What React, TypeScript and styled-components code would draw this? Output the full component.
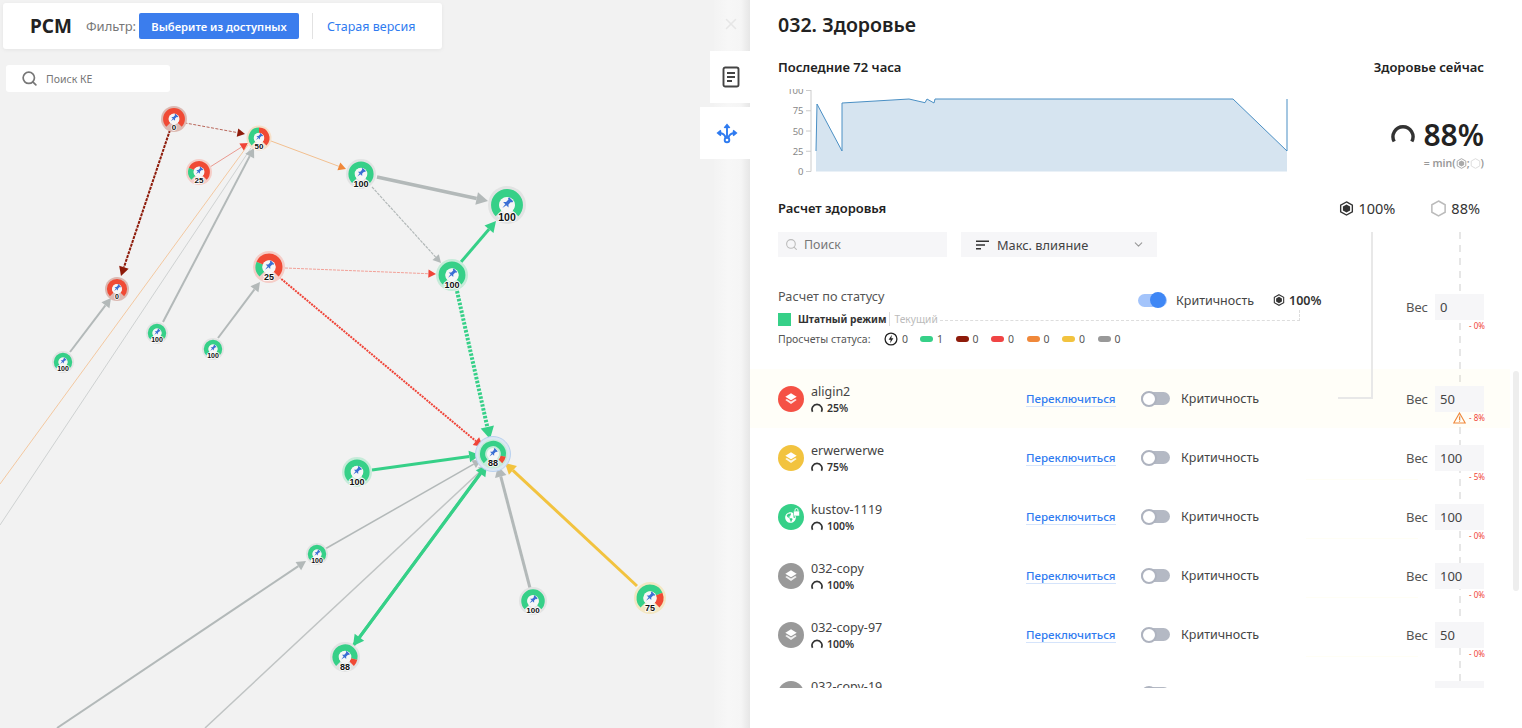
import React from "react";
import styled, { createGlobalStyle } from "styled-components";
import { ChevronDown, Search, X } from "lucide-react";
import { FaGlobeAmericas } from "react-icons/fa";

const GlobalStyle = createGlobalStyle`
  html, body {
    margin: 0;
    padding: 0;
    height: 100%;
    overflow: hidden;
    background: #fff;
    font-family: "Noto Sans", "Open Sans", sans-serif;
    color: #333;
  }
  * { box-sizing: border-box; }
`;

/* ---------- graph data ---------- */

type NodeItem = {
  x: number;
  y: number;
  r: number;
  score: number;
  halo: string;
  selected?: boolean;
};

const HALO_GRAY = "#e2e3e3";
const HALO_GREEN = "#c6ebd9";

const nodes: NodeItem[] = [
  { x: 174, y: 119, r: 13, score: 0, halo: "#dcb9b2" },
  { x: 259, y: 138, r: 12.5, score: 50, halo: "#f6dfc8" },
  { x: 199, y: 172, r: 13, score: 25, halo: "#f5cdc7" },
  { x: 361, y: 174, r: 15, score: 100, halo: HALO_GRAY },
  { x: 507, y: 205, r: 19, score: 100, halo: HALO_GRAY },
  { x: 269, y: 267, r: 16, score: 25, halo: "#f5cdc7" },
  { x: 452, y: 275, r: 16, score: 100, halo: HALO_GREEN },
  { x: 117, y: 289, r: 12, score: 0, halo: "#dcb9b2" },
  { x: 157, y: 333, r: 11, score: 100, halo: HALO_GRAY },
  { x: 213, y: 349, r: 11, score: 100, halo: HALO_GRAY },
  { x: 63, y: 362, r: 11, score: 100, halo: HALO_GRAY },
  { x: 493, y: 454, r: 14.5, score: 88, halo: HALO_GREEN, selected: true },
  { x: 357, y: 472, r: 15, score: 100, halo: HALO_GREEN },
  { x: 317, y: 554, r: 11, score: 100, halo: HALO_GRAY },
  { x: 533, y: 601, r: 14, score: 100, halo: HALO_GRAY },
  { x: 650, y: 598, r: 16, score: 75, halo: "#f3e7c3" },
  { x: 345, y: 657, r: 15, score: 88, halo: HALO_GRAY },
];

type EdgeItem = {
  from: [number, number];
  to: [number, number];
  color: string;
  head?: string;
  width: number;
  dash?: string;
  noHead?: boolean;
};

const edges: EdgeItem[] = [
  { from: [0, 484], to: [248, 145], color: "#f3c8a0", width: 1, noHead: true },
  { from: [0, 525], to: [251, 148], color: "#cfd2d2", width: 1, noHead: true },
  { from: [180, 122], to: [245, 134], color: "#b9675b", head: "#8e1b0a", width: 1, dash: "3 1.5" },
  { from: [170, 130], to: [121, 276], color: "#8e1b0a", width: 2, dash: "3 1" },
  { from: [210, 167], to: [248, 143], color: "#ea9a90", head: "#f04438", width: 1 },
  { from: [271, 141], to: [346, 169], color: "#f3c090", head: "#f0883a", width: 1 },
  { from: [377, 177], to: [488, 201], color: "#b3b9b9", width: 3.5 },
  { from: [372, 187], to: [441, 263], color: "#b3b9b9", width: 1.2, dash: "3 1" },
  { from: [461, 262], to: [496, 221], color: "#36d088", width: 3 },
  { from: [285, 268], to: [436, 274], color: "#f2a198", head: "#f04438", width: 1, dash: "3 1" },
  { from: [279, 277], to: [483, 447], color: "#f04438", width: 2, dash: "2 1" },
  { from: [457, 291], to: [490, 439], color: "#36d088", width: 4, dash: "2.5 1.5" },
  { from: [372, 470], to: [480, 455], color: "#36d088", width: 3 },
  { from: [218, 338], to: [260, 282], color: "#b3b9b9", width: 2 },
  { from: [163, 322], to: [254, 148], color: "#b3b9b9", width: 2 },
  { from: [70, 352], to: [111, 298], color: "#b3b9b9", width: 2 },
  { from: [325, 549], to: [481, 460], color: "#b3b9b9", width: 1.5 },
  { from: [57, 728], to: [306, 561], color: "#b3b9b9", width: 2 },
  { from: [205, 728], to: [487, 465], color: "#c0c4c4", width: 1.5 },
  { from: [485, 467], to: [353, 646], color: "#36d088", width: 3 },
  { from: [353, 646], to: [487, 465], color: "#36d088", width: 3 },
  { from: [530, 588], to: [498, 466], color: "#b3b9b9", width: 3 },
  { from: [637, 586], to: [505, 463], color: "#f2c33f", width: 3 },
];

/* ---------- graph drawing ---------- */

const polar = (x: number, y: number, r: number, deg: number) => {
  const a = ((deg - 90) * Math.PI) / 180;
  return `${(x + r * Math.cos(a)).toFixed(2)} ${(y + r * Math.sin(a)).toFixed(2)}`;
};

const arc = (x: number, y: number, r: number, a: number, b: number) =>
  `M${polar(x, y, r, a)} A${r} ${r} 0 ${b - a > 180 ? 1 : 0} 1 ${polar(x, y, r, b)}`;

const NodeLabel = styled.text<{ $size: number }>`
  font-family: "Liberation Sans", sans-serif;
  font-weight: 700;
  font-size: ${(p) => p.$size}px;
  fill: #111;
  text-anchor: middle;
  paint-order: stroke;
  stroke: #fff;
  stroke-width: 1.6px;
`;

const Edge = ({ item }: { item: EdgeItem }) => {
  const [x1, y1] = item.from;
  const [x2, y2] = item.to;
  const angle = Math.atan2(y2 - y1, x2 - x1);
  const len = 6 + item.width * 1.6;
  const half = 3.2 + item.width * 0.9;
  const bx = x2 - Math.cos(angle) * len;
  const by = y2 - Math.sin(angle) * len;
  const nx = -Math.sin(angle) * half;
  const ny = Math.cos(angle) * half;
  return (
    <g>
      <line
        x1={x1}
        y1={y1}
        x2={item.noHead ? x2 : bx}
        y2={item.noHead ? y2 : by}
        stroke={item.color}
        strokeWidth={item.width}
        strokeDasharray={item.dash}
      />
      {!item.noHead && (
        <polygon
          points={`${x2},${y2} ${bx + nx},${by + ny} ${bx - nx},${by - ny}`}
          fill={item.head || item.color}
        />
      )}
    </g>
  );
};

const GraphNode = ({ item }: { item: NodeItem }) => {
  const { x, y, r, score } = item;
  const mid = item.selected ? r * 0.72 : r * 0.62;
  const stroke = item.selected ? r * 0.36 : r * 0.44;
  const split = -135 + (270 * score) / 100;
  const font = r > 17 ? 10.5 : r > 14 ? 9 : r > 12 ? 8 : 7;
  const scale = r / 11;
  return (
    <g>
      {item.selected && (
        <circle cx={x} cy={y} r={17.5} fill="#dbe7f3" stroke="#b9d1ef" strokeWidth={1} />
      )}
      <circle cx={x} cy={y} r={r} fill={item.halo} />
      {score > 0 && (
        <path d={arc(x, y, mid, -135, split)} fill="none" stroke="#36d088" strokeWidth={stroke} />
      )}
      {score < 100 && (
        <path d={arc(x, y, mid, split, 135)} fill="none" stroke="#f04a35" strokeWidth={stroke} />
      )}
      <circle cx={x} cy={y} r={r * 0.42} fill="#f6f6f6" />
      <path
        transform={`translate(${x} ${y - r * 0.08}) rotate(45) scale(${scale * 0.76})`}
        fill="#3b6fd4"
        d="M-2.2-4.5h4.4v1.2l-.9.4v2.6l1.6 1.6h-5.8l1.6-1.6v-2.6l-.9-.4z M-.6 1.3h1.2l-.6 3.7z"
      />
      <NodeLabel $size={font} x={x} y={y + r * 0.62 + font * 0.36}>
        {score}
      </NodeLabel>
    </g>
  );
};

/* ---------- icons ---------- */

const ArcIcon = ({ size }: { size: number }) => (
  <svg width={size} height={size} viewBox="0 0 24 24" fill="none">
    <path d="M3.2 19.5 A10 10 0 1 1 20.8 19.5" stroke="#333" strokeWidth={3.4} />
  </svg>
);

const HexIcon = ({ size, filled, color }: { size: number; filled?: boolean; color?: string }) => (
  <svg width={size} height={size} viewBox="0 0 20 20">
    <polygon
      points="10,1.2 17.8,5.6 17.8,14.4 10,18.8 2.2,14.4 2.2,5.6"
      fill="none"
      stroke={color || "#bbb"}
      strokeWidth={1.8}
    />
    {filled && (
      <polygon points="10,4.6 14.8,7.3 14.8,12.7 10,15.4 5.2,12.7 5.2,7.3" fill={color || "#222"} />
    )}
  </svg>
);

const LayersIcon = () => (
  <svg width={14} height={14} viewBox="0 0 16 16" fill="#fff">
    <path d="M8 1.5 14.5 5.4 8 9.3 1.5 5.4z" />
    <path d="M3.2 8 8 10.9 12.8 8l1.7 1.1L8 13.6 1.5 9.1z" opacity={0.85} />
  </svg>
);

const GlobeGlyph = styled.span`
  position: relative;
  display: flex;
  color: #fff;
  margin: 2px 2px 0 0;
`;

const LockMark = styled.svg`
  position: absolute;
  right: -4px;
  top: -4px;
`;

const GlobeIcon = () => (
  <GlobeGlyph>
    <FaGlobeAmericas size={11} />
    <LockMark width={7} height={8} viewBox="0 0 7 8">
      <rect x={0.5} y={3} width={6} height={5} rx={0.8} fill="#fff" stroke="#36d088" strokeWidth={0.6} />
      <path d="M2 3V2a1.5 1.5 0 0 1 3 0v1" fill="none" stroke="#fff" strokeWidth={0.9} />
    </LockMark>
  </GlobeGlyph>
);

const DocIcon = () => (
  <svg width={18} height={22} viewBox="0 0 18 22" fill="none" stroke="#444" strokeWidth={1.9}>
    <rect x={1.5} y={1.5} width={15} height={19} rx={1.8} />
    <path d="M5 7h8M5 11h8M5 15h5" />
  </svg>
);

const RouteIcon = () => (
  <svg width={22} height={22} viewBox="0 0 22 22" fill="none" stroke="#2f7bf0" strokeWidth={1.9}>
    <circle cx={11} cy={18} r={2.3} />
    <path d="M11 15.5V3.5" />
    <path d="M8.4 6 11 3l2.6 3" fill="#2f7bf0" />
    <path d="M9.6 16C9 12.5 6 11 2.5 11" />
    <path d="M12.4 16C13 12.5 16 11 19.5 11" />
    <path d="M5 8.6 2 11l3 2.4" fill="#2f7bf0" />
    <path d="M17 8.6l3 2.4-3 2.4" fill="#2f7bf0" />
  </svg>
);

const SortIcon = () => (
  <svg width={13} height={10} viewBox="0 0 13 10" stroke="#333" strokeWidth={1.5}>
    <path d="M0 1.2h13M0 5h9M0 8.8h5" />
  </svg>
);

const BoltIcon = () => (
  <svg width={14} height={14} viewBox="0 0 14 14">
    <circle cx={7} cy={7} r={5.9} fill="none" stroke="#222" strokeWidth={1.3} />
    <path d="M7.9 2.8 4.6 7.7h2.1L6.1 11.2 9.4 6.3H7.3z" fill="#222" />
  </svg>
);

const WarnIcon = () => (
  <svg width={13} height={12} viewBox="0 0 13 12" fill="none" stroke="#f0883a" strokeWidth={1.1}>
    <path d="M6.5 1 12.2 11H.8z" />
    <path d="M6.5 4.5v3.4M6.5 8.8v1" />
  </svg>
);

/* ---------- canvas ---------- */

const Page = styled.div`
  display: flex;
  width: 1522px;
  height: 728px;
  overflow: hidden;
`;

const Canvas = styled.div`
  position: relative;
  flex: 0 0 750px;
  height: 728px;
  background: #f2f2f2;
  overflow: hidden;
`;

const GraphSvg = styled.svg`
  position: absolute;
  left: 0;
  top: 0;
`;

const TopBar = styled.div`
  position: absolute;
  left: 3px;
  top: 3px;
  width: 439px;
  height: 46px;
  display: flex;
  align-items: center;
  padding-left: 27px;
  background: #fff;
  border-radius: 3px;
  box-shadow: 0 1px 4px rgba(0, 0, 0, 0.06);
`;

const Logo = styled.span`
  font-size: 19px;
  font-weight: 700;
  color: #222;
  width: 56px;
`;

const FilterLabel = styled.span`
  font-size: 13px;
  color: #777;
  width: 53px;
`;

const PrimaryButton = styled.button`
  width: 160px;
  height: 26px;
  border: none;
  border-radius: 2px;
  background: #3b7ded;
  color: #fff;
  font: 600 11.2px "Noto Sans", sans-serif;
  padding: 0;
`;

const BarDivider = styled.span`
  width: 1px;
  height: 26px;
  margin: 0 14px 0 13px;
  background: #e2e2e2;
`;

const OldVersion = styled.a`
  font-size: 12.5px;
  color: #2f7bf0;
`;

const SearchKe = styled.div`
  position: absolute;
  left: 6px;
  top: 65px;
  width: 164px;
  height: 27px;
  display: flex;
  align-items: center;
  gap: 8px;
  padding-left: 15px;
  background: #fff;
  border-radius: 3px;
  font-size: 10.5px;
  color: #777;
`;

const SideStrip = styled.div`
  position: absolute;
  right: 0;
  top: 0;
  width: 36px;
  height: 728px;
  background: linear-gradient(90deg, #f3f3f3 0%, #f7f7f7 40%, #f5f5f5 75%, #e6e6e6 100%);
`;

const CloseMark = styled.div`
  position: absolute;
  left: 722px;
  top: 15px;
  color: #e6e6e6;
  display: flex;
`;

const SideTab = styled.div<{ $wide?: boolean; $top: number }>`
  position: absolute;
  right: 0;
  top: ${(p) => p.$top}px;
  width: ${(p) => (p.$wide ? 50 : 40)}px;
  height: 52px;
  background: #fff;
  display: flex;
  align-items: center;
  justify-content: center;
  padding-left: ${(p) => (p.$wide ? 4 : 2)}px;
`;

/* ---------- panel ---------- */

const Panel = styled.div`
  position: relative;
  flex: 1;
  height: 728px;
  background: #fff;
  overflow: hidden;
`;

const PanelHead = styled.div`
  padding: 0 38px 0 28px;
`;

const Title = styled.h1`
  margin: 0;
  height: 50px;
  line-height: 50px;
  font-size: 19.6px;
  font-weight: 600;
  color: #222;
`;

const HistoryRow = styled.div`
  display: flex;
  justify-content: space-between;
  height: 141px;
  margin-top: 8px;
`;

const SectionTitle = styled.div`
  height: 18px;
  line-height: 18px;
  font-size: 13px;
  font-weight: 600;
  color: #222;
`;

const ChartBox = styled.div`
  width: 512px;
  height: 90px;
  margin-top: 13px;
  overflow: hidden;
`;

const AxisText = styled.text`
  font-size: 9.5px;
  fill: #888;
  text-anchor: end;
`;

const NowColumn = styled.div`
  display: flex;
  flex-direction: column;
  align-items: flex-end;
`;

const NowValue = styled.div`
  display: flex;
  align-items: center;
  gap: 8px;
  margin-top: 38px;
  height: 40px;
  font-size: 30px;
  font-weight: 600;
  color: #222;
`;

const NowFormula = styled.div`
  display: flex;
  align-items: center;
  height: 18px;
  font-size: 10.5px;
  font-weight: 600;
  color: #999;
`;

const CalcRow = styled.div`
  display: flex;
  align-items: center;
  justify-content: space-between;
  height: 18px;
`;

const CalcValues = styled.div`
  display: flex;
  align-items: center;
  gap: 35px;
  padding-right: 4px;
`;

const HexValue = styled.span<{ $bold?: boolean; $size?: number }>`
  display: flex;
  align-items: center;
  gap: 4px;
  font-size: ${(p) => p.$size || 14.5}px;
  font-weight: ${(p) => (p.$bold ? 600 : 400)};
  color: #333;
`;

const ToolRow = styled.div`
  display: flex;
  gap: 14px;
  margin-top: 15px;
`;

const SearchField = styled.label`
  display: flex;
  align-items: center;
  gap: 6px;
  width: 169px;
  height: 25px;
  padding-left: 7px;
  background: #f6f6f8;
  color: #bbb;
`;

const SearchInput = styled.input`
  border: none;
  outline: none;
  background: none;
  width: 120px;
  padding: 0;
  font: 12.4px "Noto Sans", sans-serif;
  &::placeholder {
    color: #777;
  }
`;

const SortSelect = styled.div`
  display: flex;
  align-items: center;
  width: 196px;
  height: 25px;
  padding: 0 12px 0 15px;
  background: #f6f6f8;
  font-size: 12.8px;
  color: #444;
`;

const SortText = styled.span`
  flex: 1;
  margin-left: 8px;
`;

const StatusBlock = styled.div`
  position: relative;
  display: flex;
  height: 82px;
  margin-top: 30px;
  padding-right: 38px;
  padding-left: 28px;
`;

const StatusLeft = styled.div`
  width: 360px;
`;

const StatusTitle = styled.div`
  height: 18px;
  line-height: 18px;
  font-size: 12.7px;
  color: #555;
`;

const LegendRow = styled.div`
  display: flex;
  align-items: center;
  height: 14px;
  margin-top: 7px;
  font-size: 10.2px;
`;

const LegendSquare = styled.span`
  width: 13px;
  height: 13px;
  margin-right: 7px;
  background: #36d088;
`;

const LegendName = styled.span`
  font-weight: 700;
  color: #333;
  padding-right: 3px;
  border-right: 1px solid #ddd;
`;

const LegendCurrent = styled.span`
  color: #bbb;
  margin-left: 4px;
`;

const CountRow = styled.div`
  display: flex;
  align-items: center;
  height: 14px;
  margin-top: 6px;
  font-size: 10.5px;
  color: #555;
`;

const CountLabel = styled.span`
  width: 106px;
`;

const CountItem = styled.span<{ $width: number }>`
  display: flex;
  align-items: center;
  gap: 4px;
  width: ${(p) => p.$width}px;
`;

const Pill = styled.span<{ $color: string }>`
  width: 13px;
  height: 6px;
  border-radius: 3px;
  background: ${(p) => p.$color};
`;

const StatusCritical = styled.div`
  display: flex;
  align-items: center;
  height: 26px;
`;

const Track = styled.span<{ $on?: boolean }>`
  position: relative;
  display: block;
  width: 29px;
  height: 13px;
  border-radius: 7px;
  background: ${(p) => (p.$on ? "#a3c4fb" : "#b4b9c4")};
`;

const Knob = styled.span<{ $on?: boolean }>`
  position: absolute;
  top: -1.5px;
  left: ${(p) => (p.$on ? 12 : 0)}px;
  width: 16px;
  height: 16px;
  border-radius: 50%;
  background: ${(p) => (p.$on ? "#3f87f5" : "#fff")};
  border: ${(p) => (p.$on ? "none" : "2px solid #aeb3bf")};
`;

const CriticalLabel = styled.span<{ $gap: number; $width?: number }>`
  margin-left: ${(p) => p.$gap}px;
  width: ${(p) => (p.$width ? `${p.$width}px` : "auto")};
  font-size: 12.5px;
  color: #444;
`;

const WeightCell = styled.div`
  position: relative;
  display: flex;
  align-items: center;
  margin-left: auto;
  height: 26px;
  font-size: 13px;
  color: #555;
`;

const WeightStatus = styled(WeightCell)`
  margin-top: 7px;
`;

const WeightInput = styled.div`
  width: 49px;
  height: 26px;
  line-height: 26px;
  margin-left: 7px;
  padding-left: 5px;
  background: #f6f6f8;
  font-size: 13px;
  color: #444;
`;

const Delta = styled.span`
  position: absolute;
  right: -1px;
  top: 26px;
  display: flex;
  align-items: center;
  gap: 3px;
  font-size: 8px;
  line-height: 12px;
  color: #f04438;
`;

const RowList = styled.div`
  position: relative;
  width: 760px;
  height: 319px;
  overflow: hidden;
`;

const Row = styled.div<{ $active?: boolean }>`
  display: flex;
  align-items: center;
  height: 59px;
  padding: 0 26px 0 28px;
  background: ${(p) =>
    p.$active
      ? "rgba(255, 245, 150, 0.07)"
      : "linear-gradient(#fffef5, #fffef5) no-repeat 556px 51px / 112px 1px"};
`;

const RowInfo = styled.div`
  display: flex;
  align-items: center;
  gap: 7px;
  width: 248px;
`;

const RowBadge = styled.span<{ $color: string }>`
  display: flex;
  align-items: center;
  justify-content: center;
  width: 26px;
  height: 26px;
  border-radius: 50%;
  background: ${(p) => p.$color};
`;

const RowText = styled.div`
  padding-top: 3px;
`;

const RowName = styled.div`
  font-size: 12.5px;
  line-height: 16px;
  color: #444;
`;

const RowScore = styled.div`
  display: flex;
  align-items: center;
  gap: 4px;
  height: 16px;
  font-size: 10.5px;
  font-weight: 600;
  color: #333;
`;

const SwitchLink = styled.a`
  width: 115px;
  font-size: 11.5px;
  font-weight: 500;
  color: #2f7bf0;
`;

const SwitchText = styled.span`
  border-bottom: 1px solid #d5e4fb;
`;

/* connector lines that run behind and over the rows */

const WeightAxis = styled.div`
  position: absolute;
  left: 709px;
  top: 232px;
  width: 2px;
  height: 456px;
  background: repeating-linear-gradient(#e6e6e6 0 7px, transparent 7px 13px);
`;

const CalcBracket = styled.div`
  position: absolute;
  left: 588px;
  top: 232px;
  width: 35px;
  height: 167px;
  border-right: 2px solid #e8e8e8;
  border-bottom: 2px solid #e8e8e8;
  z-index: 2;
`;

const StatusBracket = styled.div`
  position: absolute;
  left: 190px;
  top: 310px;
  width: 360px;
  height: 11px;
  border-right: 1px dashed #ddd;
  border-bottom: 1px dashed #ddd;
`;

const ScrollThumb = styled.div`
  position: absolute;
  left: 763px;
  top: 371px;
  width: 6px;
  height: 220px;
  border-radius: 3px;
  background: #eee;
`;

/* ---------- content ---------- */

type RowItem = {
  name: string;
  score: number;
  color: string;
  weight: number;
  delta: string;
  warn?: boolean;
  globe?: boolean;
};

const rows: RowItem[] = [
  { name: "aligin2", score: 25, color: "#f55145", weight: 50, delta: "- 8%", warn: true },
  { name: "erwerwerwe", score: 75, color: "#f2c33f", weight: 100, delta: "- 5%" },
  { name: "kustov-1119", score: 100, color: "#36d088", weight: 100, delta: "- 0%", globe: true },
  { name: "032-copy", score: 100, color: "#999", weight: 100, delta: "- 0%" },
  { name: "032-copy-97", score: 100, color: "#999", weight: 50, delta: "- 0%" },
  { name: "032-copy-19", score: 100, color: "#999", weight: 100, delta: "- 0%" },
];

const counts = [
  { color: "#36d088", value: 1 },
  { color: "#8e1b0a", value: 0 },
  { color: "#f04444", value: 0 },
  { color: "#f0883a", value: 0 },
  { color: "#f2c33f", value: 0 },
  { color: "#999", value: 0 },
];

const CHART_LINE =
  "M38 64 L39 17 L64 64 L64 16 L131 12 L147 15.7 L149 12 L156 16 L157 12 L455 12 L509 64 L509 12";

const HistoryChart = () => (
  <svg width={512} height={90} viewBox="0 2 512 90">
    <path d={`${CHART_LINE} L509 84.5 L38 84.5Z`} fill="#d6e4f0" />
    <path d={CHART_LINE} fill="none" stroke="#4a8fc4" strokeWidth={1} />
    <path d="M33 3V84.5" stroke="#ccc" />
    {[100, 75, 50, 25, 0].map((tick, i) => {
      const y = 3.5 + i * 20.25;
      return (
        <g key={tick}>
          <path d={`M28 ${y}h5`} stroke="#ccc" />
          <AxisText x={25.5} y={y + 3.5}>
            {tick}
          </AxisText>
        </g>
      );
    })}
  </svg>
);

const App = () => {
  return (
    <Page>
      <GlobalStyle />
      <Canvas>
        <GraphSvg width={750} height={728} viewBox="0 0 750 728">
          {edges.map((edge, i) => (
            <Edge key={i} item={edge} />
          ))}
          {nodes.map((node, i) => (
            <GraphNode key={i} item={node} />
          ))}
        </GraphSvg>
        <SideStrip />
        <TopBar>
          <Logo>PCM</Logo>
          <FilterLabel>Фильтр:</FilterLabel>
          <PrimaryButton>Выберите из доступных</PrimaryButton>
          <BarDivider />
          <OldVersion>Старая версия</OldVersion>
        </TopBar>
        <SearchKe>
          <Search size={17} color="#777" strokeWidth={2.4} />
          <span>Поиск КЕ</span>
        </SearchKe>
        <CloseMark>
          <X size={18} />
        </CloseMark>
        <SideTab $top={51}>
          <DocIcon />
        </SideTab>
        <SideTab $top={107} $wide>
          <RouteIcon />
        </SideTab>
      </Canvas>

      <Panel>
        <WeightAxis />
        <StatusBracket />
        <CalcBracket />
        <ScrollThumb />
        <PanelHead>
          <Title>032. Здоровье</Title>
          <HistoryRow>
            <div>
              <SectionTitle>Последние 72 часа</SectionTitle>
              <ChartBox>
                <HistoryChart />
              </ChartBox>
            </div>
            <NowColumn>
              <SectionTitle>Здоровье сейчас</SectionTitle>
              <NowValue>
                <ArcIcon size={24} />
                88%
              </NowValue>
              <NowFormula>
                = min(
                <HexIcon size={11} filled color="#aaa" />;
                <HexIcon size={11} color="#ddd" />)
              </NowFormula>
            </NowColumn>
          </HistoryRow>
          <CalcRow>
            <SectionTitle>Расчет здоровья</SectionTitle>
            <CalcValues>
              <HexValue>
                <HexIcon size={15} filled color="#333" />
                100%
              </HexValue>
              <HexValue>
                <HexIcon size={17} />
                88%
              </HexValue>
            </CalcValues>
          </CalcRow>
          <ToolRow>
            <SearchField>
              <Search size={13} />
              <SearchInput placeholder="Поиск" />
            </SearchField>
            <SortSelect>
              <SortIcon />
              <SortText>Макс. влияние</SortText>
              <ChevronDown size={13} color="#999" />
            </SortSelect>
          </ToolRow>
        </PanelHead>

        <StatusBlock>
          <StatusLeft>
            <StatusTitle>Расчет по статусу</StatusTitle>
            <LegendRow>
              <LegendSquare />
              <LegendName>Штатный режим</LegendName>
              <LegendCurrent>Текущий</LegendCurrent>
            </LegendRow>
            <CountRow>
              <CountLabel>Просчеты статуса:</CountLabel>
              <CountItem $width={36}>
                <BoltIcon />0
              </CountItem>
              {counts.map((item, i) => (
                <CountItem key={i} $width={35.5}>
                  <Pill $color={item.color} />
                  {item.value}
                </CountItem>
              ))}
            </CountRow>
          </StatusLeft>
          <StatusCritical>
            <Track $on>
              <Knob $on />
            </Track>
            <CriticalLabel $gap={9} $width={97}>
              Критичность
            </CriticalLabel>
            <HexValue $bold $size={12.5}>
              <HexIcon size={12} filled color="#333" />
              100%
            </HexValue>
          </StatusCritical>
          <WeightStatus>
            Вес
            <WeightInput>0</WeightInput>
            <Delta>- 0%</Delta>
          </WeightStatus>
        </StatusBlock>

        <RowList>
          {rows.map((row) => (
            <Row key={row.name} $active={row.warn}>
              <RowInfo>
                <RowBadge $color={row.color}>{row.globe ? <GlobeIcon /> : <LayersIcon />}</RowBadge>
                <RowText>
                  <RowName>{row.name}</RowName>
                  <RowScore>
                    <ArcIcon size={12} />
                    {row.score}%
                  </RowScore>
                </RowText>
              </RowInfo>
              <SwitchLink>
                <SwitchText>Переключиться</SwitchText>
              </SwitchLink>
              <Track>
                <Knob />
              </Track>
              <CriticalLabel $gap={11}>Критичность</CriticalLabel>
              <WeightCell>
                Вес
                <WeightInput>{row.weight}</WeightInput>
                <Delta>
                  {row.warn && <WarnIcon />}
                  {row.delta}
                </Delta>
              </WeightCell>
            </Row>
          ))}
        </RowList>
      </Panel>
    </Page>
  );
};

export default App;
